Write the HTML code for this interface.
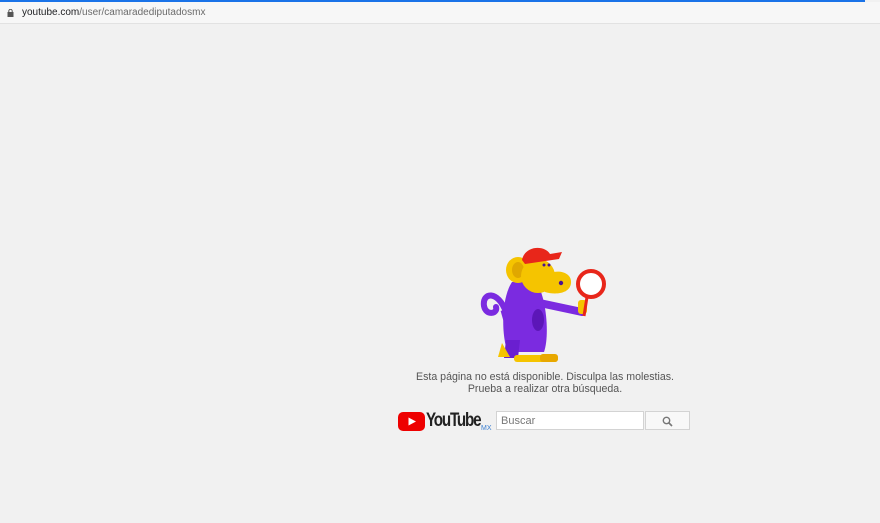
<!DOCTYPE html>
<html><head><meta charset="utf-8"><style>
body{margin:0;width:880px;height:523px;background:#f1f1f1;font-family:"Liberation Sans",sans-serif;position:relative;overflow:hidden}
.top{position:absolute;left:0;top:0;width:865px;height:2px;background:#1a73e8}
.bar{position:absolute;left:0;top:2px;width:880px;height:21px;background:#f7f7f7;border-bottom:1px solid #e2e2e2}
.url{position:absolute;left:22px;top:7px;font-size:10px;color:#202124}
.url span{color:#6b6b6b}
.msg{position:absolute;left:380px;width:330px;top:371px;text-align:center;font-size:10.6px;color:#555;line-height:12px}
.logo{position:absolute;left:398px;top:412px}
.yt{position:absolute;left:426px;top:410px;font-size:19px;font-weight:bold;color:#222;letter-spacing:-1.5px;transform:scaleX(.8);transform-origin:left}
.mx{position:absolute;left:481px;top:425px;font-size:7px;color:#3b7fd0}
.inp{position:absolute;left:496px;top:411px;width:148px;height:19px;background:#fff;border:1px solid #d3d3d3;font-size:11px;color:#777;box-sizing:border-box;padding:3px 4px}
.btn{position:absolute;left:645px;top:411px;width:45px;height:19px;background:#f8f8f8;border:1px solid #d3d3d3;box-sizing:border-box}
</style></head><body>
<div class="top"></div>
<div class="bar"></div>
<svg style="position:absolute;left:7px;top:9px" width="7" height="8"><rect x="0.5" y="3" width="6" height="5" fill="#555"/><path d="M1.8 3.5V2a1.7 1.7 0 0 1 3.4 0v1.5" stroke="#555" fill="none" stroke-width="1"/></svg>
<div class="url">youtube.com<span>/user/camaradediputadosmx</span></div>
<svg style="position:absolute;left:470px;top:240px" width="150" height="130" viewBox="0 0 150 130">
<path d="M36 72 C28 50 12 52 14 66 C16 76 28 74 26 67" stroke="#7b2be0" stroke-width="6" fill="none" stroke-linecap="round"/>
<path d="M34 70 C38 85 42 95 44 105" stroke="#7b2be0" stroke-width="7" fill="none"/>
<path d="M42 42 C30 60 32 100 38 112 L74 112 C80 95 76 55 66 42 Z" fill="#7b2be0"/>
<path d="M36 100 L34 118 L48 118 L50 100 Z" fill="#6a1fd0"/>
<ellipse cx="68" cy="80" rx="6" ry="11" fill="#5c16b8"/>
<path d="M65 62 L112 72" stroke="#7b2be0" stroke-width="8" stroke-linecap="round"/>
<rect x="108" y="60" width="9" height="14" rx="3" fill="#f5c400"/>
<circle cx="121" cy="44" r="13" fill="#fff" stroke="#e8261a" stroke-width="4"/>
<path d="M117 57 L114 76" stroke="#e8261a" stroke-width="3"/>
<ellipse cx="48" cy="30" rx="12" ry="13" fill="#f5c400"/>
<ellipse cx="48" cy="30" rx="6" ry="8" fill="#e0a800"/>
<ellipse cx="68" cy="36" rx="17" ry="17" fill="#f5c400"/>
<path d="M72 38 C82 28 102 30 101 43 C100 54 85 55 75 52 Z" fill="#f5c400"/>
<circle cx="91" cy="43" r="2.2" fill="#4a1290"/>
<circle cx="74" cy="25" r="1.5" fill="#4a1290"/><circle cx="79" cy="25" r="1.5" fill="#4a1290"/>
<path d="M52 20 C55 5 75 5 80 14 L92 12 L89 19 L55 24 Z" fill="#e8261a"/>
<path d="M32 103 L28 117 L40 117 Z" fill="#f5c400"/>
<rect x="44" y="115" width="44" height="7" rx="3" fill="#f5c400"/>
<rect x="70" y="114" width="18" height="8" rx="3" fill="#e8a800"/>
</svg>
<div class="msg">Esta página no está disponible. Disculpa las molestias.<br>Prueba a realizar otra búsqueda.</div>
<svg class="logo" width="27" height="19"><rect width="27" height="19" rx="5" fill="#e00"/><path d="M10.5 5.5 L18 9.5 L10.5 13.5Z" fill="#fff"/></svg>
<div class="yt">YouTube</div>
<div class="mx">MX</div>
<div class="inp">Buscar</div>
<div class="btn"><svg style="position:absolute;left:16px;top:4px" width="11" height="11"><circle cx="4.5" cy="4.5" r="3.2" stroke="#777" stroke-width="1.4" fill="none"/><path d="M7 7 L10 10" stroke="#777" stroke-width="1.6"/></svg></div>
</body></html>
